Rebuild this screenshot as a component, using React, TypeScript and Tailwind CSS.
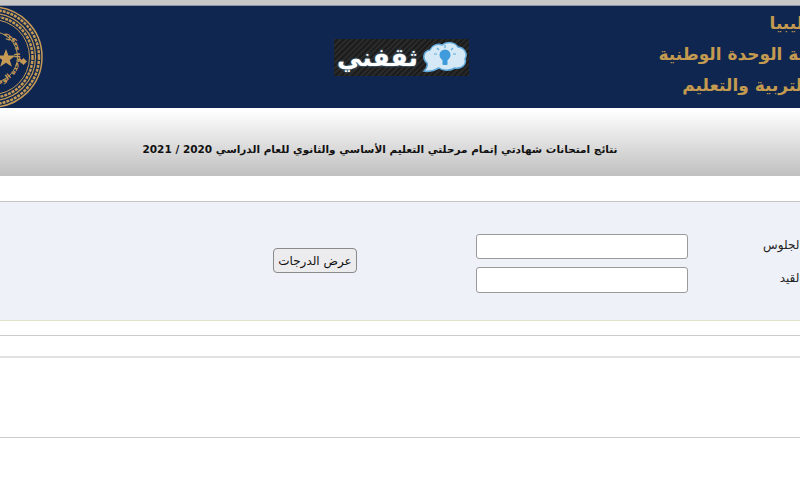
const arabic = { fontFamily: '"DejaVu Sans", sans-serif' };

const Seal = () => {
  return (
    <svg width="106" height="106" viewBox="0 0 106 106" className="shrink-0">
      <defs>
        <path id="sealText" d="M 53 25 A 28 28 0 1 0 53.1 25" />
      </defs>
      <circle cx="53" cy="53" r="50" fill="none" stroke="#c49a55" strokeWidth="1.5" />
      <circle cx="53" cy="53" r="47" fill="none" stroke="#c49a55" strokeWidth="2.5" strokeDasharray="3 1" />
      <circle cx="53" cy="53" r="43.5" fill="none" stroke="#c49a55" strokeWidth="1.2" />
      <circle cx="53" cy="53" r="40.5" fill="none" stroke="#c49a55" strokeWidth="2.5" strokeDasharray="3 1" />
      <circle cx="53" cy="53" r="37.5" fill="none" stroke="#c49a55" strokeWidth="1" />
      <circle cx="53" cy="53" r="25.5" fill="none" stroke="#c49a55" strokeWidth="1" />
      <text fontSize="7.5" fontWeight="700" fill="#c49a55" style={arabic}>
        <textPath href="#sealText">حكومة الوحدة الوطنية وزارة التربية والتعليم</textPath>
      </text>
      <polygon
        points="67,45 69.4,51.6 76.5,51.6 70.8,55.9 72.9,62.8 67,58.7 61.1,62.8 63.2,55.9 57.5,51.6 64.6,51.6"
        fill="#c49a55"
      />
      <rect x="82" y="55" width="5" height="5" transform="rotate(45 84.5 57.5)" fill="#c49a55" />
    </svg>
  );
};

const Bulb = () => {
  return (
    <svg width="46" height="33" viewBox="0 0 46 33" className="shrink-0">
      <path
        d="M2 30 C5 27 6 25 5 22 C0 18 1 10 8 9 C10 4 16 2 20 4 C25 0 33 1 36 6 C43 7 46 13 43 18 C45 24 39 28 33 27 C28 30 21 30 17 27 C12 30 7 31 2 30 Z"
        fill="#d4e8f6"
        stroke="#5ea9dc"
        strokeWidth="1.5"
      />
      <circle cx="23" cy="14" r="5.5" fill="#3f9bdc" />
      <rect x="20.5" y="18" width="5" height="6" rx="1" fill="#3f9bdc" />
      <path
        d="M23 4 V7 M15 7 L17 9 M31 7 L29 9 M12 13 H15 M31 13 H34"
        stroke="#5ea9dc"
        strokeWidth="1.2"
      />
    </svg>
  );
};

const Logo = () => {
  return (
    <div className="ml-[289px] flex h-[37px] w-[135px] shrink-0 items-center justify-between bg-[repeating-linear-gradient(135deg,#2a2a2a_0px,#2a2a2a_2px,#1c1c1c_2px,#1c1c1c_4px)] pr-[1px] pl-[3px]">
      <span
        dir="rtl"
        className="text-[25px] leading-none font-bold text-white [text-shadow:0_0_2px_#7db8e0]"
        style={arabic}
      >
        ثقفني
      </span>
      <Bulb />
    </div>
  );
};

const App = () => {
  return (
    <div className="h-[500px] w-[800px] overflow-hidden bg-white" style={arabic}>
      <div className="h-[5px] bg-[#c8c8c8]" />
      <header className="flex h-[103px] items-center border-t border-[#8a93a5] bg-[#0e2650]">
        <div className="-ml-[61px]">
          <Seal />
        </div>
        <Logo />
        <div
          dir="rtl"
          className="-mr-[42px] ml-auto flex w-[191px] shrink-0 flex-col gap-[7px] pb-[6px] text-[17px] leading-[24px] font-bold whitespace-nowrap text-[#c39a4f]"
        >
          <p className="-mr-[3px]">دولة ليبيا</p>
          <p>حكومة الوحدة الوطنية</p>
          <p className="-mr-[18px]">وزارة التربية والتعليم</p>
        </div>
      </header>
      <div className="mt-[2px] flex h-[66px] items-center justify-center bg-gradient-to-b from-white to-[#c0c0c0] pt-[14px] pr-[40px]">
        <h1 dir="rtl" className="text-[10.5px] font-bold whitespace-nowrap text-[#111]">
          نتائج امتحانات شهادتي إتمام مرحلتي التعليم الأساسي والثانوي للعام الدراسي 2020 / 2021
        </h1>
      </div>
      <form className="mt-[25px] flex h-[120px] items-center border-t border-b border-t-[#c4c4c4] border-b-[#e2e4c8] bg-[#eef1f7] pl-[273px]">
        <button
          type="button"
          dir="rtl"
          className="mb-[1px] h-[25px] w-[84px] shrink-0 rounded-[4px] border border-[#8a8a8a] bg-[#ecebee] text-[12px] whitespace-nowrap text-[#111]"
        >
          عرض الدرجات
        </button>
        <div className="mt-[5px] ml-[119px] flex w-[212px] shrink-0 flex-col gap-[8px]">
          <input className="h-[25px] rounded-[3px] border border-[#9a9a9a] bg-white" />
          <input className="h-[26px] rounded-[3px] border border-[#9a9a9a] bg-white" />
        </div>
        <div
          dir="rtl"
          className="ml-[26px] flex w-[112px] shrink-0 flex-col gap-[15px] text-[12px] leading-[18px] whitespace-nowrap text-[#222]"
        >
          <label>رقم الجلوس</label>
          <label>رقم القيد</label>
        </div>
      </form>
      <div className="h-[15px] border-b border-[#cccccc]" />
      <div className="h-[22px] border-b-2 border-[#e2e2e2]" />
      <div className="h-[80px] border-b border-[#cccccc]" />
    </div>
  );
};

export default App;
